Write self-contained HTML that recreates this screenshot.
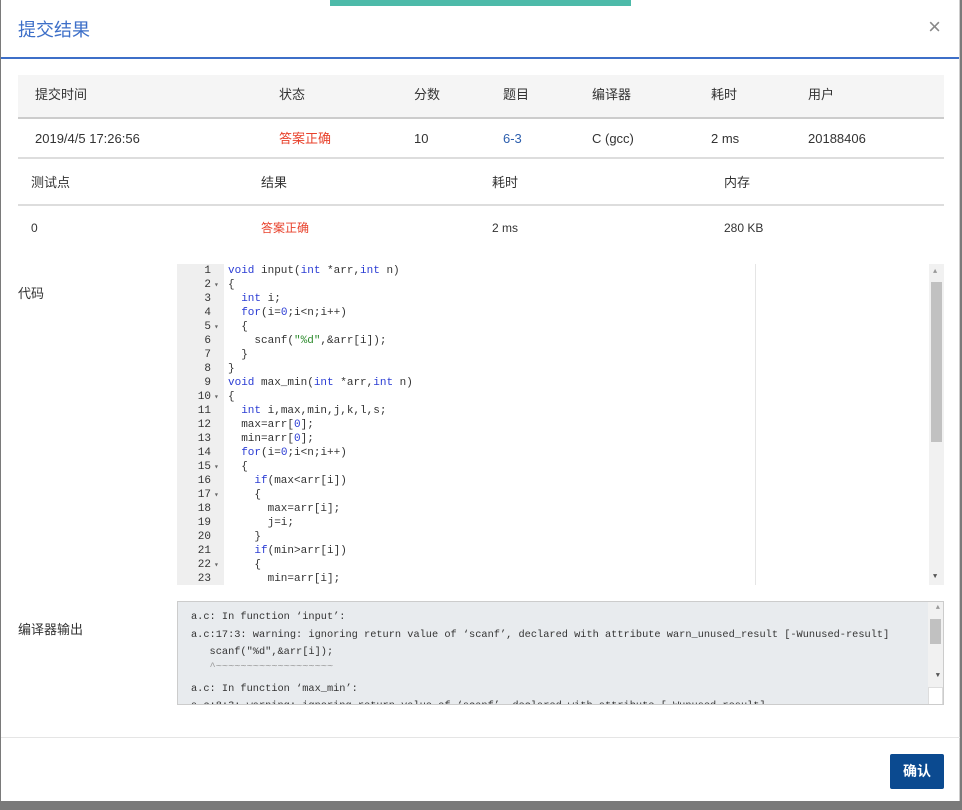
<!DOCTYPE html>
<html><head><meta charset="utf-8"><style>
*{box-sizing:border-box;margin:0;padding:0}
body{width:962px;height:810px;background:#7a7a7a;font-family:"Liberation Sans","Noto Sans CJK SC",sans-serif;font-size:13px;color:#333;position:relative;overflow:hidden}
.modal{position:absolute;left:1px;top:0;width:959px;height:801px;background:#fff;border-right:1px solid #ccc}
.green{position:absolute;left:330px;top:0;width:301px;height:6px;background:#4dbaa9;z-index:3}
.hdr{position:absolute;left:0;top:0;width:100%;height:59px;border-bottom:2px solid #3d6fc8}
.hdr h4{position:absolute;left:17px;top:16px;font-size:18px;font-weight:normal;color:#3d6fc8}
.close{position:absolute;right:18px;top:14px;font-size:22px;color:#888}
.t{position:absolute;left:17px;width:926px}
.row{position:absolute;left:0;width:100%;height:44px}
.row span{position:absolute;top:12px;line-height:16px}
.red{color:#e8412b}.blue{color:#2d5fae}
.code{position:absolute;left:177px;top:264px;width:767px;height:321px;background:#fff;font-family:"Liberation Mono",monospace;font-size:11px;overflow:hidden}
.gut{position:absolute;left:0;top:0;width:47px;height:100%;background:#efefef}
.ln{position:absolute;left:0;width:34px;text-align:right;color:#333}
.cl{position:absolute;left:51px;white-space:pre;color:#333}
.k{color:#2a3cd4}.s{color:#2e8b2e}.n{color:#2a3cd4}
.sb{position:absolute;right:0;top:0;width:15px;height:100%;background:#f1f1f1}
.out{position:absolute;left:177px;top:601px;width:767px;height:104px;background:#e8ebee;border:1px solid #ccc;font-family:"Liberation Mono",monospace;font-size:10.3px;color:#333;overflow:hidden}
.out div{position:absolute;left:13px;white-space:pre}
.btn{position:absolute;left:890px;top:754px;width:54px;height:35px;background:#0b4a90;color:#fff;font-size:14px;font-weight:bold;text-align:center;line-height:35px;border-radius:2px}
</style></head><body>
<div class="green"></div>
<div class="modal">
<div class="hdr"><h4>提交结果</h4><div class="close">×</div></div>
<div class="t" style="top:75px;height:84px">
<div class="row" style="top:0;background:#f5f5f5;border-bottom:2px solid #ccc"><span style="left:17px">提交时间</span><span style="left:261px">状态</span><span style="left:396px">分数</span><span style="left:485px">题目</span><span style="left:574px">编译器</span><span style="left:693px">耗时</span><span style="left:790px">用户</span></div>
<div class="row" style="top:44px;height:40px;border-bottom:2px solid #ddd"><span style="left:17px">2019/4/5 17:26:56</span><span class="red" style="left:261px">答案正确</span><span style="left:396px">10</span><span class="blue" style="left:485px">6-3</span><span style="left:574px">C (gcc)</span><span style="left:693px">2 ms</span><span style="left:790px">20188406</span></div>
</div>
<div class="t" style="top:160px;height:90px">
<div class="row" style="top:0;height:46px;border-bottom:2px solid #ddd"><span style="left:13px;top:15px">测试点</span><span style="left:243px;top:15px">结果</span><span style="left:474px;top:15px">耗时</span><span style="left:706px;top:15px">内存</span></div>
<div class="row" style="top:46px"><span style="left:13px;top:14px;font-size:12px">0</span><span class="red" style="left:243px;top:14px;font-size:12px">答案正确</span><span style="left:474px;top:14px;font-size:12px">2 ms</span><span style="left:706px;top:14px;font-size:12px">280 KB</span></div>
</div>
<div style="position:absolute;left:17px;top:283px">代码</div>
<div style="position:absolute;left:17px;top:619px">编译器输出</div>
</div>
<div class="code">
<div class="gut"></div>
<div style="position:absolute;left:578px;top:0;width:1px;height:100%;background:#e5e5e5"></div>
<div class="sb"><div style="position:absolute;left:2px;top:18px;width:11px;height:160px;background:#c1c1c1"></div><div style="position:absolute;left:4px;top:4px;font-size:7px;color:#999">▲</div><div style="position:absolute;left:4px;bottom:4px;font-size:7px;color:#555">▼</div></div>
<div id="c"></div>
</div>
<div class="out">
<div style="top:9px">a.c: In function ‘input’:</div>
<div style="top:27px">a.c:17:3: warning: ignoring return value of ‘scanf’, declared with attribute warn_unused_result [-Wunused-result]</div>
<div style="top:44px">   scanf("%d",&amp;arr[i]);</div>
<div style="top:59px;color:#999">   ^~~~~~~~~~~~~~~~~~~~</div>
<div style="top:81px">a.c: In function ‘max_min’:</div>
<div style="top:98px">a.c:8:3: warning: ignoring return value of ‘scanf’, declared with attribute [-Wunused-result]</div>
<div style="left:auto;right:0;top:0;width:15px;height:100%;background:#f1f1f1"></div>
<div style="left:auto;right:2px;top:17px;width:11px;height:25px;background:#c1c1c1"></div>
<div style="left:auto;right:3px;top:2px;font-size:7px;color:#999">▲</div>
<div style="left:auto;right:3px;top:70px;font-size:7px;color:#555">▼</div>
<div style="left:auto;right:0;top:85px;width:15px;height:18px;background:#fff;border:1px solid #ddd"></div>
</div>
<div style="position:absolute;left:1px;top:737px;width:959px;height:1px;background:#e5e5e5"></div>
<div class="btn">确认</div>
<script>
var L=[['<span class=k>void</span> input(<span class=k>int</span> *arr,<span class=k>int</span> n)',0],['{',1],['  <span class=k>int</span> i;',0],['  <span class=k>for</span>(i=<span class=n>0</span>;i&lt;n;i++)',0],['  {',1],['    scanf(<span class=s>"%d"</span>,&amp;arr[i]);',0],['  }',0],['}',0],['<span class=k>void</span> max_min(<span class=k>int</span> *arr,<span class=k>int</span> n)',0],['{',1],['  <span class=k>int</span> i,max,min,j,k,l,s;',0],['  max=arr[<span class=n>0</span>];',0],['  min=arr[<span class=n>0</span>];',0],['  <span class=k>for</span>(i=<span class=n>0</span>;i&lt;n;i++)',0],['  {',1],['    <span class=k>if</span>(max&lt;arr[i])',0],['    {',1],['      max=arr[i];',0],['      j=i;',0],['    }',0],['    <span class=k>if</span>(min&gt;arr[i])',0],['    {',1],['      min=arr[i];',0]];
var h='';L.forEach(function(l,i){var y=1+i*14;h+='<div class=ln style="top:'+y+'px">'+(i+1)+'</div>'+(l[1]?'<div style="position:absolute;left:37px;top:'+(y+1)+'px;font-size:8px;color:#666">▾</div>':'')+'<div class=cl style="top:'+y+'px">'+l[0]+'</div>';});
document.getElementById('c').innerHTML=h;
</script>
</body></html>
